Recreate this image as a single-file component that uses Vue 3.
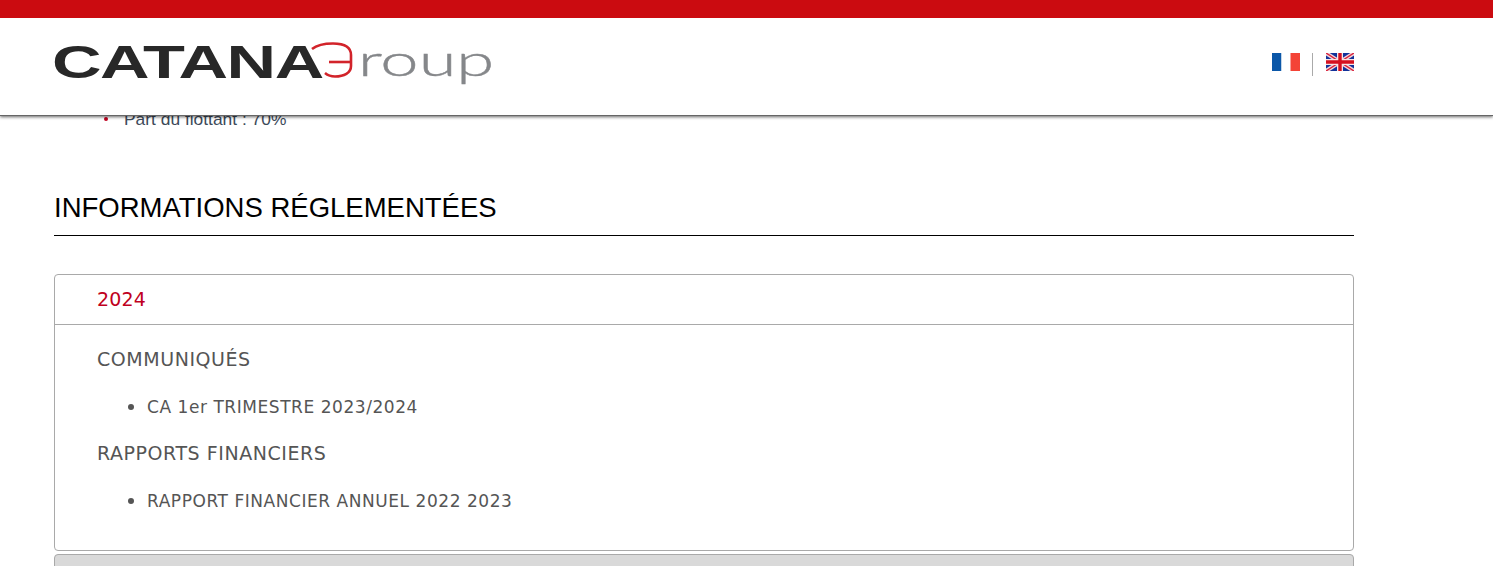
<template>
  <div class="page">
    <header class="site-header">
      <div class="top-bar"></div>
      <div class="header-inner">
        <a class="logo" href="#" aria-label="Catana Group">
          <span class="logo-catana">CATANA</span>
          <svg class="logo-mark" width="42" height="36" viewBox="0 0 42 36" aria-hidden="true">
            <path d="M1 7C6 3 14 1.5 22 1.5C33 1.5 40 5 40 13V24C40 31 33 34.5 24 34.5C20 34.5 17 33.5 14 31" fill="none" stroke="#d2232a" stroke-width="2.6" />
            <path d="M18 20H40" fill="none" stroke="#d2232a" stroke-width="2.6" />
          </svg>
          <span class="logo-group">roup</span>
        </a>
        <div class="langs">
          <a href="#" class="flag" aria-label="Français">
            <svg width="28" height="18" viewBox="0 0 28 18">
              <rect width="9.5" height="18" fill="#0b57a8" />
              <rect x="9.5" width="9" height="18" fill="#fff" />
              <rect x="18.5" width="9.5" height="18" fill="#f44336" />
            </svg>
          </a>
          <span class="lang-sep"></span>
          <a href="#" class="flag" aria-label="English">
            <svg width="28" height="18" viewBox="0 0 28 18">
              <rect width="28" height="18" fill="#12329a" />
              <path d="M0 0L28 18M28 0L0 18" stroke="#f3d6da" stroke-width="4" />
              <path d="M0 0L28 18M28 0L0 18" stroke="#d8203a" stroke-width="1.4" />
              <path d="M14 0V18M0 9H28" stroke="#f5e4e6" stroke-width="6" />
              <path d="M14 0V18M0 9H28" stroke="#d5101f" stroke-width="3.4" />
            </svg>
          </a>
        </div>
      </div>
    </header>

    <main class="content">
      <ul class="facts">
        <li>Part du flottant : 70%</li>
      </ul>

      <h2 class="section-title">INFORMATIONS RÉGLEMENTÉES</h2>

      <section class="panel">
        <div class="panel-head">2024</div>
        <div class="panel-body">
          <template v-for="group in groups" :key="group.title">
            <h3>{{ group.title }}</h3>
            <ul class="docs">
              <li v-for="doc in group.docs" :key="doc">{{ doc }}</li>
            </ul>
          </template>
        </div>
      </section>
      <section class="panel closed"></section>
    </main>
  </div>
</template>

<script setup>
const groups = [
  { title: 'COMMUNIQUÉS', docs: ['CA 1er TRIMESTRE 2023/2024'] },
  { title: 'RAPPORTS FINANCIERS', docs: ['RAPPORT FINANCIER ANNUEL 2022 2023'] }
]
</script>

<style>
html,
body {
  margin: 0;
  height: 100%;
  overflow: hidden;
  background: #fff;
}
</style>

<style scoped>
* {
  box-sizing: border-box;
}

.page {
  height: 566px;
  overflow: hidden;
  position: relative;
  font-family: "DejaVu Sans", Verdana, sans-serif;
}

.site-header {
  position: absolute;
  top: 0;
  left: 0;
  right: 0;
  height: 116px;
  background: #fff;
  border-bottom: 1px solid #666;
  box-shadow: 0 1px 3px rgba(0, 0, 0, 0.6);
  z-index: 2;
}

.top-bar {
  height: 18px;
  background: #cb0b10;
}

.header-inner {
  width: 1300px;
  margin-left: 54px;
  display: flex;
  justify-content: space-between;
  align-items: flex-start;
}

.logo {
  display: flex;
  align-items: flex-start;
  height: 70px;
  margin-top: 24px;
  text-decoration: none;
}

.logo-catana {
  display: block;
  width: 257px;
  margin-left: -2px;
  margin-right: 2px;
  font-family: "Liberation Sans", Arial, sans-serif;
  font-weight: 700;
  font-size: 47px;
  line-height: 40px;
  letter-spacing: -1px;
  color: #282828;
  transform: scaleX(1.46);
  transform-origin: left top;
  white-space: nowrap;
}

.logo-mark {
  flex: none;
  margin-top: 0;
}

.logo-group {
  display: block;
  font-family: "Lato", "Open Sans", sans-serif;
  font-weight: 300;
  font-size: 44px;
  line-height: 44px;
  color: #85878a;
  margin-left: 5px;
  margin-top: -5px;
  -webkit-text-stroke: 0.4px #85878a;
  transform: scaleX(1.56);
  transform-origin: left top;
}

.langs {
  display: flex;
  align-items: flex-start;
  margin-top: 35px;
}

.flag {
  display: block;
  height: 18px;
}

.flag svg {
  display: block;
}

.lang-sep {
  width: 1px;
  height: 23px;
  background: #aaa;
  margin: 0 13px 0 12px;
}

.content {
  width: 1300px;
  margin-left: 54px;
  padding-top: 109px;
}

.facts {
  margin: 0;
  padding: 0 0 0 70px;
  list-style: none;
  font-family: "Liberation Sans", Arial, sans-serif;
  font-size: 17.4px;
  line-height: 20px;
  color: #3d4a5a;
}

.facts li {
  position: relative;
}

.facts li::before {
  content: "";
  position: absolute;
  left: -20px;
  top: 8px;
  width: 4px;
  height: 4px;
  border-radius: 50%;
  background: #c00020;
}

.section-title {
  margin: 0;
  margin-top: 54px;
  height: 53px;
  padding-top: 9px;
  border-bottom: 1px solid #000;
  font-family: "Liberation Sans", Arial, sans-serif;
  font-size: 27.5px;
  line-height: 32px;
  font-weight: 400;
  color: #000;
}

.panel {
  margin-top: 38px;
  border: 1px solid #a9a9a9;
  border-radius: 4px;
  background: #fff;
  height: 277px;
}

.panel.closed {
  margin-top: 3px;
  height: 60px;
  background: #d9d9d9;
}

.panel-head {
  height: 50px;
  padding-left: 42px;
  border-bottom: 1px solid #a9a9a9;
  font-size: 19px;
  line-height: 48px;
  letter-spacing: 0.2px;
  color: #c00020;
}

.panel-body {
  padding: 22px 42px 0;
  color: #555;
}

.panel-body h3 {
  margin: 0;
  font-size: 19px;
  line-height: 24px;
  letter-spacing: 0.55px;
  font-weight: 400;
}

.docs {
  margin: 0;
  padding: 23px 0 0 50px;
  height: 70px;
  font-size: 17px;
  line-height: 24px;
  letter-spacing: 0.55px;
}

.docs li::marker {
  font-size: 20px;
}
</style>
